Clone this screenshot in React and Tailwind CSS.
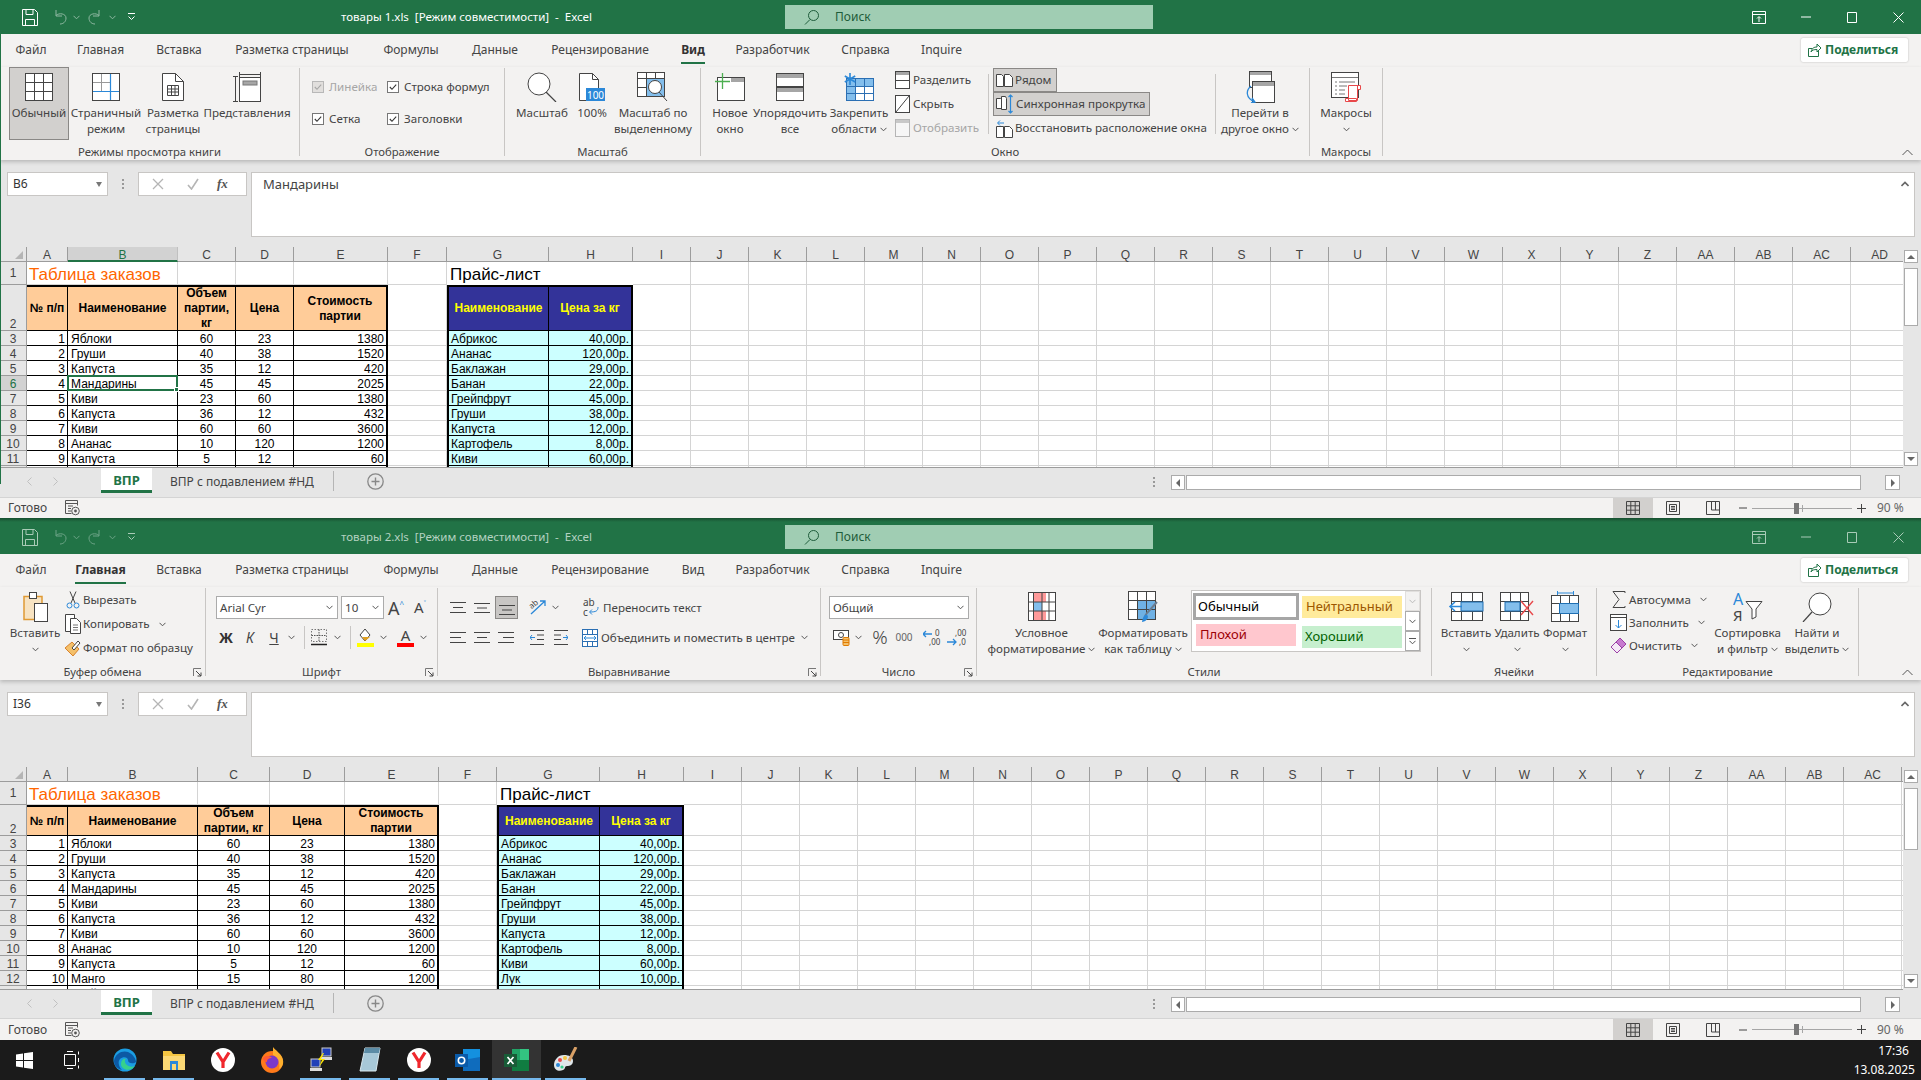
import React from "react";

/* ---------------- DATA ---------------- */

const ORDERS = [
  [1, "Яблоки", 60, 23, 1380],
  [2, "Груши", 40, 38, 1520],
  [3, "Капуста", 35, 12, 420],
  [4, "Мандарины", 45, 45, 2025],
  [5, "Киви", 23, 60, 1380],
  [6, "Капуста", 36, 12, 432],
  [7, "Киви", 60, 60, 3600],
  [8, "Ананас", 10, 120, 1200],
  [9, "Капуста", 5, 12, 60],
  [10, "Манго", 15, 80, 1200],
  [11, "Грейпфрут", 14, 45, 630],
];

const PRICES = [
  ["Абрикос", "40,00р."],
  ["Ананас", "120,00р."],
  ["Баклажан", "29,00р."],
  ["Банан", "22,00р."],
  ["Грейпфрут", "45,00р."],
  ["Груши", "38,00р."],
  ["Капуста", "12,00р."],
  ["Картофель", "8,00р."],
  ["Киви", "60,00р."],
  ["Лук", "10,00р."],
  ["Манго", "80,00р."],
];

const LETTERS = "A B C D E F G H I J K L M N O P Q R S T U V W X Y Z AA AB AC AD".split(" ");

const TABS = [
  ["Файл", "w-[60px]"],
  ["Главная", "w-[79px]"],
  ["Вставка", "w-[78px]"],
  ["Разметка страницы", "w-[148px]"],
  ["Формулы", "w-[90px]"],
  ["Данные", "w-[78px]"],
  ["Рецензирование", "w-[132px]"],
  ["Вид", "w-[54px]"],
  ["Разработчик", "w-[105px]"],
  ["Справка", "w-[81px]"],
  ["Inquire", "w-[71px]"],
];

const GRID_ONE =
  "grid-cols-[27px_41px_110px_58px_58px_94px_59px_102px_84px_repeat(22,58px)]";
const GRID_TWO =
  "grid-cols-[27px_41px_130px_72px_75px_94px_58px_103px_84px_repeat(22,58px)]";

/* ---------------- ICON HELPERS ---------------- */

const D = "#444444";
const B = "#2b88d8";
const LB = "#83beec";

function S({ w, h, children, className = "" }) {
  return (
    <svg width={w} height={h} viewBox={`0 0 ${w} ${h}`} fill="none" className={`shrink-0 ${className}`}>
      {children}
    </svg>
  );
}

function Chev({ color = "#555" }) {
  return (
    <S w={7} h={5}>
      <path d="M.5 .8 3.5 3.8 6.5 .8" stroke={color} />
    </S>
  );
}

function Launcher() {
  return (
    <S w={9} h={9}>
      <path d="M.5 8V.5H8" stroke="#777" />
      <path d="M3 3 8 8M8 4.5V8H4.5" stroke="#444" />
    </S>
  );
}

/* ---------------- RIBBON ICONS (VIEW TAB) ---------------- */

const IcNormal = () => (
  <S w={28} h={28}>
    <rect x=".5" y=".5" width="27" height="27" fill="#fff" stroke={D} />
    <path d="M9.5 1v26M18.5 1v26M1 9.5h26M1 18.5h26" stroke={D} />
  </S>
);
const IcBreak = () => (
  <S w={28} h={28}>
    <rect x=".5" y=".5" width="27" height="27" fill="#fff" stroke={D} />
    <path d="M9.5 1v17M1 9.5h17" stroke="#999" />
    <path d="M18.5 1v26M1 18.5h26" stroke={B} strokeWidth="1.2" />
  </S>
);
const IcLayout = () => (
  <S w={22} h={28}>
    <path d="M.5.5h13l8 8v19H.5z" fill="#fff" stroke={D} />
    <path d="M13.5.5v8h8" stroke={D} />
    <path d="M5.5 12.5h11v10h-11zM9.5 12.5v10M13 12.5v10M5.5 16h11M5.5 19h11" stroke={D} />
  </S>
);
const IcViews = () => (
  <S w={30} h={30}>
    <path d="M7.5 0v5M28.5 0v5M8 2.5h20M1 4.5h5M1 29.5h5M3.5 5v24" stroke={D} />
    <rect x="7.5" y="5.5" width="21" height="24" fill="#fff" stroke={D} />
    <rect x="11" y="9" width="14" height="4" fill="#a6a6a6" stroke="#777" />
  </S>
);
const IcZoom = () => (
  <S w={30} h={30}>
    <circle cx="12" cy="12" r="11" fill="#fff" stroke={D} />
    <path d="M19 20 29 30" stroke={D} strokeWidth="1.2" />
  </S>
);
const Ic100 = () => (
  <S w={28} h={28}>
    <path d="M1.5.5h13l6 6v21h-19z" fill="#fff" stroke={D} />
    <path d="M14.5.5v6h6" stroke={D} />
    <rect x="8" y="15" width="19" height="13" fill="#2b88d8" />
    <text x="17.5" y="25.5" textAnchor="middle" fontSize="10" fill="#fff" fontFamily="Noto Sans, sans-serif">100</text>
  </S>
);
const IcZoomSel = () => (
  <S w={32} h={30}>
    <rect x=".5" y=".5" width="27" height="24" fill="#fff" stroke={D} />
    <path d="M.5 6.5h27M9.5 1v24M18.5 1v24M1 15.5h27" stroke={D} />
    <rect x="10" y="7" width="17" height="17" fill={LB} />
    <circle cx="18" cy="15" r="6.5" fill="#fff" stroke={D} />
    <path d="M22 20 30 29" stroke={D} />
  </S>
);
const IcNewWin = () => (
  <S w={30} h={28}>
    <rect x="2.5" y="4.5" width="27" height="23" fill="#fff" stroke={D} />
    <rect x="16" y="5" width="13" height="4" fill="#a6a6a6" />
    <path d="M0 8.5h15M7.5 0v16" stroke="#4caf50" strokeWidth="1.3" />
  </S>
);
const IcArrange = () => (
  <S w={28} h={28}>
    <rect x=".5" y=".5" width="27" height="13" fill="#fff" stroke={D} />
    <rect x="1" y="1" width="26" height="4" fill="#a6a6a6" />
    <rect x=".5" y="14.5" width="27" height="13" fill="#fff" stroke={D} />
    <rect x="1" y="15" width="26" height="4" fill="#a6a6a6" />
  </S>
);
const IcFreeze = () => (
  <S w={30} h={28}>
    <rect x="2.5" y="5.5" width="27" height="22" fill="#fff" stroke="#2b6fb3" />
    <rect x="3" y="6" width="26" height="7" fill={LB} />
    <rect x="3" y="6" width="9" height="21" fill={LB} />
    <path d="M11.5 6v21M20.5 6v21M3 13.5h26M3 20.5h26" stroke="#2b6fb3" />
    <path d="M6 0v12M.8 3l10.4 6M.8 9l10.4-6" stroke="#2b88d8" strokeWidth="1.6" />
  </S>
);
const IcSplit = () => (
  <S w={15} h={18}>
    <rect x=".5" y=".5" width="14" height="17" fill="#fff" stroke={D} />
    <rect x="1" y="1" width="13" height="3" fill="#a6a6a6" />
    <path d="M1 9.5h13" stroke={D} />
  </S>
);
const IcHide = () => (
  <S w={15} h={18}>
    <rect x=".5" y=".5" width="14" height="17" fill="#fff" stroke={D} />
    <path d="M1 17 14 1" stroke={D} />
  </S>
);
const IcUnhide = () => (
  <S w={15} h={18}>
    <rect x=".5" y=".5" width="14" height="17" fill="#f6f6f6" stroke="#b5b5b5" />
    <rect x="1" y="1" width="13" height="3" fill="#c8c8c8" />
  </S>
);
const IcSide = () => (
  <S w={17} h={13}>
    <path d="M.5.5h5l2 2v10h-7zM8.5.5h5l3 3v9h-8z" fill="#fff" stroke={D} />
  </S>
);
const IcSync = () => (
  <S w={18} h={20}>
    <path d="M.5 4.5h4l1 1v9h-5zM5.5 2.5h4l1 2v11h-5z" fill="#fff" stroke={D} />
    <path d="M14.5 1v18M12.5 3l2-2 2 2M12.5 17l2 2 2-2" stroke={B} strokeWidth="1.2" />
  </S>
);
const IcReset = () => (
  <S w={17} h={19}>
    <path d="M.5 7.5h7v11h-7zM8.5 7.5h5l3 3v8h-8z" fill="#fff" stroke={D} />
    <path d="M8 4H2M4 1.5 1.5 4 4 6.5" stroke={B} />
  </S>
);
const IcSwitch = () => (
  <S w={30} h={32}>
    <rect x="4.5" y=".5" width="22" height="16" fill="#fff" stroke={D} />
    <rect x="5" y="1" width="21" height="3" fill="#a6a6a6" />
    <rect x="7.5" y="10.5" width="22" height="21" fill="#fff" stroke={D} />
    <rect x="8" y="11" width="21" height="4" fill="#a6a6a6" />
    <path d="M6 15C1 19 0 27 10 31M7 27l3 4-4 1" stroke={B} strokeWidth="1.3" />
  </S>
);
const IcMacros = () => (
  <S w={30} h={30}>
    <rect x=".5" y=".5" width="27" height="25" fill="#fff" stroke={D} />
    <path d="M1 5.5h26M8 10h16M8 14h8M4 10h2M4 14h2M4 18h2M4 22h2M8 18h6M8 22h6" stroke="#777" />
    <path d="M17.5 13.5h9v15h-9zM26.5 13.5h3v4h-3zM14.5 26.5h11v3h-11z" fill="#fff" stroke="#e8484a" />
  </S>
);

/* ---------------- RIBBON ICONS (HOME TAB) ---------------- */

const IcPaste = () => (
  <S w={28} h={30}>
    <path d="M3 4.5h18v23H3z" fill="#f7e3c2" stroke="#e09a34" strokeWidth="1.5" />
    <rect x="8.5" y=".5" width="7" height="6" fill="#fff" stroke={D} />
    <rect x="13.5" y="11.5" width="13" height="18" fill="#fff" stroke={D} />
  </S>
);
const IcCut = () => (
  <S w={14} h={18}>
    <path d="M4 .5 9 12M10 .5 5 12" stroke={D} />
    <circle cx="3.5" cy="14.5" r="2.5" stroke={B} />
    <circle cx="10.5" cy="14.5" r="2.5" stroke={B} />
  </S>
);
const IcCopy = () => (
  <S w={16} h={20}>
    <path d="M.5.5h9v17h-9z" fill="#fff" stroke={D} />
    <path d="M5.5 4.5h6l4 4v11h-10z" fill="#fff" stroke={D} />
    <path d="M8 11h5M8 13.5h5M8 16h5" stroke="#777" />
  </S>
);
const IcPainter = () => (
  <S w={17} h={18}>
    <path d="M1 9 8 3l7 7-6 7z" fill="#f4c06a" stroke="#d9822b" />
    <path d="M8 9l6-7 2 2-6 7z" fill="#fff" stroke={D} />
  </S>
);
const IcBorders = () => (
  <S w={16} h={17}>
    <path d="M.5.5h15v12H.5z" stroke="#777" strokeDasharray="1.5 1.5" />
    <path d="M8 .5v12M.5 6.5h15" stroke="#555" strokeDasharray="1.5 1" />
    <path d="M0 15.5h16" stroke="#222" strokeWidth="1.5" />
  </S>
);
const IcFill = () => (
  <S w={17} h={19}>
    <path d="M8 1 3 7l5 6 5-6z" fill="#fff" stroke={D} />
    <path d="M5 9h8l-5 4z" fill="#e0a020" />
    <rect x="0" y="15" width="17" height="4" fill="#ffff00" />
  </S>
);
const IcColorA = () => (
  <S w={17} h={19}>
    <text x="8.5" y="12.5" textAnchor="middle" fontSize="15" fill="#444" fontFamily="Noto Sans, sans-serif">A</text>
    <rect x="0" y="15" width="17" height="4" fill="#ff0000" />
  </S>
);
const AlignRows = ({ rows }) => (
  <S w={16} h={15}>
    {rows.map((d) => (
      <path key={d} d={d} stroke={D} />
    ))}
  </S>
);
const IcOrient = () => (
  <S w={18} h={20}>
    <path d="M2 16 16 3M11 3h5v5" stroke={B} strokeWidth="1.3" />
    <text x="1" y="9" fontSize="8" fill="#444" transform="rotate(-40 5 8)" fontFamily="Noto Sans, sans-serif">ab</text>
  </S>
);
const IcIndent = ({ flip }) => (
  <S w={14} h={15} className={flip ? "-scale-x-100" : ""}>
    <path d="M0 .5h14M7 5h7M7 9.5h7M0 14.5h14" stroke={D} />
    <path d="M5 7.5H0M2 5 0 7.5 2 10" stroke={B} />
  </S>
);
const IcWrap = () => (
  <S w={16} h={19}>
    <text x="0" y="8" fontSize="10" fill="#444" fontFamily="Noto Sans, sans-serif">ab</text>
    <text x="0" y="18" fontSize="10" fill="#444" fontFamily="Noto Sans, sans-serif">c</text>
    <path d="M15 9c0 4-2 5-8 5M9 11.5 6.5 14 9 16.5" stroke={B} />
  </S>
);
const IcMerge = () => (
  <S w={16} h={18}>
    <rect x=".5" y=".5" width="15" height="17" fill="#fff" stroke="#2b6fb3" />
    <path d="M1 5.5h14M1 12.5h14M5.5 1v4M10.5 1v4M5.5 13v4M10.5 13v4" stroke="#2b6fb3" />
    <path d="M2 9h12M4 7 2 9l2 2M12 7l2 2-2 2" stroke={B} />
  </S>
);
const IcCurrency = () => (
  <S w={17} h={19}>
    <rect x=".5" y="2.5" width="15" height="9" fill="#fff" stroke={D} />
    <circle cx="8" cy="7" r="2.5" stroke={D} />
    <rect x="10" y="9.5" width="6" height="8" rx="1" fill="#f4c06a" stroke="#e07b00" />
    <path d="M10 12h6M10 14.5h6" stroke="#e07b00" />
  </S>
);
const IcDec = ({ inc }) => (
  <S w={20} h={20}>
    <path d={inc ? "M0 14h9M6 11l3 3-3 3" : "M9 6H0M3 3 0 6l3 3"} stroke={B} strokeWidth="1.3" />
    <text x={inc ? 8 : 12} y="8" fontSize="8" fill="#444" fontFamily="Noto Sans, sans-serif">{inc ? ",00" : "0"}</text>
    <text x={inc ? 12 : 6} y="17" fontSize="8" fill="#444" fontFamily="Noto Sans, sans-serif">{inc ? ",0" : ",00"}</text>
  </S>
);
const IcCond = () => (
  <S w={28} h={29}>
    <rect x=".5" y=".5" width="27" height="28" fill="#fff" stroke={D} />
    <rect x="5" y="1" width="13" height="9" fill="#ff9a9a" />
    <rect x="5" y="10" width="9" height="9" fill={LB} />
    <rect x="5" y="19" width="13" height="9" fill="#ff9a9a" />
    <path d="M5.5 1v27M14 1v27M21 1v27M1 10h26M1 19h26" stroke={D} />
  </S>
);
const IcTable = () => (
  <S w={30} h={32}>
    <rect x=".5" y=".5" width="27" height="28" fill="#fff" stroke={D} />
    <rect x="10" y="10" width="17" height="18" fill="#6fb1e4" />
    <path d="M9.5 1v27M18.5 1v27M1 9.5h26M1 18.5h26" stroke={D} />
    <path d="M29 11 19 22l-2 3" stroke="#6b7c8f" strokeWidth="2" />
    <path d="M14 31c1-6 3-8 5-7s1 6-5 7z" fill="#2b88d8" />
  </S>
);
const IcCellInsert = () => (
  <S w={36} h={29}>
    <rect x="3.5" y=".5" width="31" height="28" fill="#fff" stroke={D} />
    <path d="M13.5 1v27M24.5 1v27M4 9.5h30M4 19.5h30" stroke={D} />
    <rect x="13" y="10" width="22" height="9" fill={LB} stroke="#1f6fb2" />
    <path d="M14 14.5H3M7 10 2 14.5 7 19" stroke={B} strokeWidth="1.5" />
  </S>
);
const IcCellDelete = () => (
  <S w={34} h={29}>
    <rect x=".5" y=".5" width="28" height="28" fill="#fff" stroke={D} />
    <path d="M10.5 1v27M20.5 1v27M1 9.5h27M1 19.5h27" stroke={D} />
    <rect x="5" y="10" width="15" height="9" fill={LB} stroke="#1f6fb2" />
    <path d="M21 9 33 23M33 9 21 23" stroke="#e8484a" strokeWidth="1.4" />
  </S>
);
const IcCellFormat = () => (
  <S w={28} h={31}>
    <path d="M6.5 0v4M22.5 0v4M7 2h15" stroke={B} />
    <rect x=".5" y="4.5" width="27" height="26" fill="#fff" stroke={D} />
    <path d="M9.5 5v25M18.5 5v25M1 12.5h26M1 22.5h26" stroke={D} />
    <rect x="8.5" y="12.5" width="19" height="10" fill={LB} stroke="#1f6fb2" />
  </S>
);
const IcSum = () => (
  <S w={14} h={17}>
    <path d="M13 2V.5H1l6 8-6 8h12V15" stroke={D} />
  </S>
);
const IcFillDown = () => (
  <S w={17} h={17}>
    <rect x=".5" y=".5" width="16" height="16" fill="#fff" stroke={D} />
    <path d="M1 3.5h15" stroke={D} />
    <path d="M8.5 6v8M5.5 11l3 3 3-3" stroke={B} />
  </S>
);
const IcEraser = () => (
  <S w={17} h={17}>
    <path d="M1 10 10 1l6 6-9 9z" fill="#c77bd0" stroke="#9b3fa6" />
    <path d="M1 10l5-5 6 6-5 5z" fill="#f5e9f7" stroke="#9b3fa6" />
  </S>
);
const IcSort = () => (
  <S w={30} h={32}>
    <text x="0" y="14" fontSize="16" fill="#2b88d8" fontFamily="Noto Sans, sans-serif">А</text>
    <text x="0" y="30" fontSize="15" fill="#444" fontFamily="Noto Sans, sans-serif">Я</text>
    <path d="M13 10.5h16L23 18v8l-4 2V18z" fill="#fff" stroke={D} />
  </S>
);
const IcFind = () => (
  <S w={30} h={30}>
    <circle cx="18" cy="12" r="11" fill="#fff" stroke={D} />
    <path d="M10 20 1 30" stroke={D} strokeWidth="1.2" />
  </S>
);

/* ---------------- RIBBON PIECES ---------------- */

function Big({ w, icon, a, b, chev, disabled, active, className = "" }) {
  return (
    <div
      className={`flex h-[73px] shrink-0 flex-col items-center ${w} ${
        active ? "-mt-px border border-[#8a8886] bg-[#d2d0ce] pt-px" : ""
      } ${className}`}
    >
      <div className={`flex items-center ${active ? "h-[36px]" : "h-[37px]"}`}>{icon}</div>
      <div className={`whitespace-nowrap leading-[16px] ${disabled ? "text-[#a6a6a6]" : ""}`}>{a}</div>
      {b ? (
        <div className="flex items-center gap-[3px] whitespace-nowrap leading-[16px]">
          {b}
          {chev && <Chev />}
        </div>
      ) : (
        chev && (
          <div className="flex h-[16px] items-center">
            <Chev />
          </div>
        )
      )}
    </div>
  );
}

function Small({ icon, text, chev, disabled, h = "h-[24px]", iconW = "w-[17px]" }) {
  return (
    <div className={`flex items-center gap-[2px] whitespace-nowrap ${h} ${disabled ? "text-[#a6a6a6]" : ""}`}>
      <div className={`flex justify-center ${iconW}`}>{icon}</div>
      <span>{text}</span>
      {chev && <span className="ml-[7px] flex"><Chev /></span>}
    </div>
  );
}

function Group({ w, label, launcher, children }) {
  return (
    <div className={`relative mt-px h-[88px] shrink-0 border-r border-[#c8c6c4] ${w}`}>
      <div className="flex h-[76px]">{children}</div>
      <div className="h-[12px] text-center text-[11.3px] leading-[16px] text-[#444]">{label}</div>
      {launcher && (
        <div className="absolute bottom-[-1px] right-[3px] flex">
          <Launcher />
        </div>
      )}
    </div>
  );
}

function Check({ label, disabled }) {
  return (
    <div className={`flex h-[17px] items-center gap-[5px] whitespace-nowrap ${disabled ? "text-[#a6a6a6]" : ""}`}>
      <S w={12} h={12}>
        <rect x=".5" y=".5" width="11" height="11" fill={disabled ? "#e1dfdd" : "#fff"} stroke={disabled ? "#b8b8b8" : "#777"} />
        <path d="M2.8 6 5 8.3 9.2 3.6" stroke={disabled ? "#a6a6a6" : "#333"} strokeWidth="1.1" />
      </S>
      {label}
    </div>
  );
}

function Slot({ w, children, active }) {
  return (
    <div className={`flex h-[23px] shrink-0 items-center justify-center ${w} ${active ? "border border-[#8a8886] bg-[#c8c6c4]" : ""}`}>
      {children}
    </div>
  );
}

const VSep = ({ className = "h-[23px]" }) => <div className={`w-px shrink-0 bg-[#c8c6c4] ${className}`} />;

function ViewRibbon() {
  return (
    <>
      <Group w="w-[300px]" label="Режимы просмотра книги">
        <Big w="w-[60px]" className="ml-[9px]" active icon={<IcNormal />} a="Обычный" />
        <Big w="w-[74px]" icon={<IcBreak />} a="Страничный" b="режим" />
        <Big w="w-[60px]" icon={<IcLayout />} a="Разметка" b="страницы" />
        <Big w="w-[88px]" icon={<IcViews />} a="Представления" />
      </Group>
      <Group w="w-[205px]" label="Отображение">
        <div className="ml-[12px] mt-[10px] grid h-[49px] grid-cols-[75px_100px] content-between">
          <Check disabled label="Линейка" />
          <Check label="Строка формул" />
          <Check label="Сетка" />
          <Check label="Заголовки" />
        </div>
      </Group>
      <Group w="w-[196px]" label="Масштаб">
        <Big w="w-[52px]" className="ml-[11px]" icon={<IcZoom />} a="Масштаб" />
        <Big w="w-[48px]" icon={<Ic100 />} a="100%" />
        <Big w="w-[74px]" icon={<IcZoomSel />} a="Масштаб по" b="выделенному" />
      </Group>
      <Group w="w-[609px]" label="Окно">
        <Big w="w-[52px]" className="ml-[3px]" icon={<IcNewWin />} a="Новое" b="окно" />
        <Big w="w-[68px]" icon={<IcArrange />} a="Упорядочить" b="все" />
        <Big w="w-[70px]" icon={<IcFreeze />} a="Закрепить" b="области" chev />
        <div className="w-[94px] shrink-0">
          <Small icon={<IcSplit />} text="Разделить" />
          <Small icon={<IcHide />} text="Скрыть" />
          <Small icon={<IcUnhide />} text="Отобразить" disabled />
        </div>
        <VSep className="mt-[6px] h-[60px]" />
        <div className="ml-[4px] w-[222px] shrink-0">
          <div className="flex h-[24px] w-[64px] items-center gap-[2px] whitespace-nowrap border border-[#8a8886] bg-[#d2d0ce] pl-[2px]">
            <IcSide />
            Рядом
          </div>
          <div className="flex h-[24px] w-[157px] items-center gap-[2px] whitespace-nowrap border border-[#8a8886] bg-[#d2d0ce] pl-[2px]">
            <IcSync />
            Синхронная прокрутка
          </div>
          <div className="flex h-[24px] items-center gap-[2px] whitespace-nowrap pl-[3px]">
            <IcReset />
            Восстановить расположение окна
          </div>
        </div>
        <VSep className="mt-[6px] h-[60px]" />
        <Big w="w-[88px]" icon={<IcSwitch />} a="Перейти в" b="другое окно" chev />
      </Group>
      <Group w="w-[73px]" label="Макросы">
        <Big w="w-[72px]" icon={<IcMacros />} a="Макросы" chev />
      </Group>
    </>
  );
}

function HomeRibbon() {
  return (
    <>
      <Group w="w-[206px]" label="Буфер обмена" launcher>
        <Big w="w-[54px]" className="ml-[8px]" icon={<IcPaste />} a="Вставить" chev />
        <div className="ml-[2px] shrink-0">
          <Small icon={<IcCut />} text="Вырезать" />
          <Small icon={<IcCopy />} text="Копировать" chev />
          <Small icon={<IcPainter />} text="Формат по образцу" />
        </div>
      </Group>
      <Group w="w-[232px]" label="Шрифт" launcher>
        <div className="ml-[10px] mt-[8px]">
          <div className="flex items-center">
            <div className="flex h-[23px] w-[122px] items-center justify-between border border-[#ababab] bg-white px-[3px] pr-[4px]">
              Arial Cyr
              <Chev />
            </div>
            <div className="ml-[3px] flex h-[23px] w-[43px] items-center justify-between border border-[#ababab] bg-white px-[3px] pr-[4px]">
              10
              <Chev />
            </div>
            <Slot w="w-[24px]">
              <span className="text-[18px] leading-none">A</span>
              <span className="mb-[8px] text-[8px] leading-none text-[#2b88d8]">^</span>
            </Slot>
            <Slot w="w-[24px]">
              <span className="text-[15px] leading-none">A</span>
              <span className="mb-[8px] text-[8px] leading-none text-[#2b88d8]">˅</span>
            </Slot>
          </div>
          <div className="-ml-[2px] mt-[7px] flex items-center">
            <Slot w="w-[24px]"><span className="text-[14px] font-bold text-[#333]">Ж</span></Slot>
            <Slot w="w-[24px]"><span className="text-[14px] italic">К</span></Slot>
            <Slot w="w-[24px]"><span className="text-[14px] underline">Ч</span></Slot>
            <Slot w="w-[10px]"><Chev /></Slot>
            <VSep className="ml-[8px] h-[23px]" />
            <Slot w="w-[28px]"><IcBorders /></Slot>
            <Slot w="w-[8px]"><Chev /></Slot>
            <VSep className="ml-[9px] h-[23px]" />
            <Slot w="w-[29px]"><IcFill /></Slot>
            <Slot w="w-[6px]"><Chev /></Slot>
            <Slot w="w-[24px] ml-[7px]"><IcColorA /></Slot>
            <Slot w="w-[12px]"><Chev /></Slot>
          </div>
        </div>
      </Group>
      <Group w="w-[383px]" label="Выравнивание" launcher>
        <div className="ml-[8px] mt-[8px]">
          <div className="flex items-center">
            <Slot w="w-[24px]"><AlignRows rows={["M0 2.5h16", "M3 7.5h10", "M0 12.5h16"]} /></Slot>
            <Slot w="w-[24px]"><AlignRows rows={["M0 3.5h16", "M3 8h10", "M0 12.5h16"]} /></Slot>
            <Slot w="w-[23px] ml-[1px]" active><AlignRows rows={["M0 5.5h16", "M3 10h10", "M0 14.5h16"]} /></Slot>
            <VSep className="ml-[3px]" />
            <Slot w="w-[26px] ml-[3px]"><IcOrient /></Slot>
            <Slot w="w-[8px]"><Chev /></Slot>
            <VSep className="ml-[17px]" />
            <div className="ml-[6px] flex items-center gap-[4px] whitespace-nowrap">
              <IcWrap />
              Переносить текст
            </div>
          </div>
          <div className="mt-[7px] flex items-center">
            <Slot w="w-[24px]"><AlignRows rows={["M0 2.5h16", "M0 7.5h11", "M0 12.5h16"]} /></Slot>
            <Slot w="w-[24px]"><AlignRows rows={["M0 2.5h16", "M3 7.5h10", "M0 12.5h16"]} /></Slot>
            <Slot w="w-[24px]"><AlignRows rows={["M0 2.5h16", "M5 7.5h11", "M0 12.5h16"]} /></Slot>
            <VSep className="ml-[3px]" />
            <Slot w="w-[24px] ml-[3px]"><IcIndent /></Slot>
            <Slot w="w-[24px]"><IcIndent flip /></Slot>
            <VSep className="ml-[3px]" />
            <div className="ml-[5px] flex items-center gap-[3px] whitespace-nowrap">
              <IcMerge />
              <span className="w-[188px]">Объединить и поместить в центре</span>
              <span className="ml-[9px] flex"><Chev /></span>
            </div>
          </div>
        </div>
      </Group>
      <Group w="w-[156px]" label="Число" launcher>
        <div className="ml-[8px] mt-[8px]">
          <div className="flex h-[23px] w-[140px] items-center justify-between border border-[#ababab] bg-white px-[3px] pr-[4px]">
            Общий
            <Chev />
          </div>
          <div className="mt-[7px] flex items-center">
            <Slot w="w-[24px]"><IcCurrency /></Slot>
            <Slot w="w-[10px]"><Chev /></Slot>
            <Slot w="w-[24px] ml-[5px]"><span className="text-[19px] font-light leading-none">%</span></Slot>
            <Slot w="w-[24px]"><span className="text-[10px] text-[#666]">000</span></Slot>
            <VSep className="ml-[4px]" />
            <Slot w="w-[24px]"><IcDec /></Slot>
            <Slot w="w-[24px]"><IcDec inc /></Slot>
          </div>
        </div>
      </Group>
      <Group w="w-[455px]" label="Стили">
        <Big w="w-[113px]" className="ml-[8px]" icon={<IcCond />} a="Условное" b="форматирование" chev />
        <Big w="w-[90px]" icon={<IcTable />} a="Форматировать" b="как таблицу" chev />
        <div className="ml-[3px] mt-[2px] flex h-[62px] w-[230px] border border-[#c8c6c4] bg-white">
          <div className="grid w-[214px] grid-cols-[106px_100px] content-start gap-x-[3px] pl-[1px] pt-[2px] text-[13px]">
            <div className="flex h-[27px] items-center border-[3px] border-[#a6a6a6] pl-[2px] text-black">Обычный</div>
            <div className="mt-[3px] flex h-[22px] items-center bg-[#ffeb9c] pl-[4px] text-[#9c5700]">Нейтральный</div>
            <div className="ml-[3px] mt-[4px] flex h-[22px] w-[100px] items-center bg-[#ffc7ce] pl-[4px] text-[#9c0006]">Плохой</div>
            <div className="mt-[6px] flex h-[22px] items-center bg-[#c6efce] pl-[3px] text-[#006100]">Хороший</div>
          </div>
          <div className="flex w-[15px] flex-col">
            <div className="flex h-[20px] items-center justify-center border border-[#e1dfdd] bg-[#f3f2f1]"><Chev color="#bbb" /></div>
            <div className="flex h-[20px] items-center justify-center border border-[#ababab]"><Chev /></div>
            <div className="flex h-[20px] flex-col items-center justify-center gap-[1px] border border-[#ababab]">
              <div className="h-px w-[7px] bg-[#555]" />
              <Chev />
            </div>
          </div>
        </div>
      </Group>
      <Group w="w-[165px]" label="Ячейки">
        <Big w="w-[48px]" className="ml-[10px]" icon={<IcCellInsert />} a="Вставить" chev />
        <Big w="w-[54px]" icon={<IcCellDelete />} a="Удалить" chev />
        <Big w="w-[42px]" icon={<IcCellFormat />} a="Формат" chev />
      </Group>
      <Group w="w-[262px]" label="Редактирование">
        <div className="ml-[13px] w-[105px] shrink-0">
          <Small h="h-[23px]" icon={<IcSum />} text="Автосумма" chev />
          <Small h="h-[23px]" icon={<IcFillDown />} text="Заполнить" chev />
          <Small h="h-[23px]" icon={<IcEraser />} text="Очистить" chev />
        </div>
        <Big w="w-[65px]" icon={<IcSort />} a="Сортировка" b="и фильтр" chev />
        <Big w="w-[74px]" icon={<IcFind />} a="Найти и" b="выделить" chev />
      </Group>
    </>
  );
}

/* ---------------- SHEET ---------------- */

function Cell({ className = "", wrap, children }) {
  return (
    <div className={`min-w-0 px-[2px] ${wrap ? "whitespace-normal" : "whitespace-nowrap"} ${className}`}>
      {children}
    </div>
  );
}

const GRID_LINE = "border-r border-b border-[#d4d4d4]";
const BOX = "border-r border-b border-black";

function HeaderRow({ grid, selCol, count }) {
  return (
    <div className={`grid h-[15px] grid-rows-[15px] ${grid}`}>
      <div className="flex items-end justify-end border-r border-b border-[#9c9c9c] bg-[#e6e6e6] pr-[3px]">
        <div className="mb-[2px] h-0 w-0 border-b-[8px] border-l-[8px] border-b-[#b5b5b5] border-l-transparent" />
      </div>
      {LETTERS.slice(0, count).map((l, i) => (
        <div
          key={l}
          className={`text-center leading-[16px] text-[#444] ${
            i === selCol
              ? "border-r border-b-2 border-[#c0c0c0] border-b-[#217346] bg-[#d2d2d2] text-[#217346]"
              : "border-r border-b border-[#9c9c9c] bg-[#e6e6e6]"
          }`}
        >
          {l}
        </div>
      ))}
    </div>
  );
}

function RowHead({ n, selected, className = "items-end" }) {
  return (
    <div
      className={`flex justify-center border-r border-b border-[#9c9c9c] text-[#444] ${
        selected ? "bg-[#d2d2d2] text-[#217346]" : "bg-[#e6e6e6]"
      } ${className}`}
    >
      <span className="leading-[12px]">{n}</span>
    </div>
  );
}

const Blank = ({ n }) =>
  Array.from({ length: n }, (_, i) => <div key={i} className={GRID_LINE} />);

function TitleRow({ grid, count }) {
  const sheetFont = "font-['Liberation_Sans',sans-serif] text-[17px] leading-[25px]";
  return (
    <div className={`grid h-[23px] grid-rows-[23px] ${grid}`}>
      <RowHead n={1} className="items-center" />
      <div className={`col-span-2 overflow-visible whitespace-nowrap pl-[2px] text-[#ff6600] ${sheetFont} ${GRID_LINE}`}>
        Таблица заказов
      </div>
      <Blank n={4} />
      <div className={`col-span-2 whitespace-nowrap pl-[3px] text-black ${sheetFont}`}>Прайс-лист</div>
      <Blank n={count - 8} />
    </div>
  );
}

function HeadRow({ grid, h, count }) {
  const orange = "flex items-center justify-center text-center font-bold leading-[15px] bg-[#ffcc99] border-t-2";
  const blue = "flex items-center justify-center text-center font-bold leading-[15px] bg-[#333399] text-[#ffff00] border-t-2";
  return (
    <div className={`grid ${h} ${grid}`}>
      <RowHead n={2} />
      <Cell className={`${BOX} ${orange}`}>№ п/п</Cell>
      <Cell className={`${BOX} ${orange}`}>Наименование</Cell>
      <Cell wrap className={`${BOX} ${orange}`}>Объем партии, кг</Cell>
      <Cell className={`${BOX} ${orange}`}>Цена</Cell>
      <Cell wrap className={`${BOX} ${orange} border-r-2`}>Стоимость партии</Cell>
      <div className={GRID_LINE} />
      <Cell className={`${BOX} ${blue} border-l-2`}>Наименование</Cell>
      <Cell className={`${BOX} ${blue} border-r-2`}>Цена за кг</Cell>
      <Blank n={count - 8} />
    </div>
  );
}

// a row pushed almost out of the sheet shows only its lines, so it gets no text
function DataRow({ grid, i, count, selected, empty }) {
  const o = empty ? ["", "", "", "", ""] : ORDERS[i];
  const p = empty ? ["", ""] : PRICES[i];
  const n = i + 3;
  return (
    <div className={`grid h-[15px] grid-rows-[15px] leading-[16px] ${grid}`}>
      <RowHead n={empty ? "" : n} selected={selected} />
      <Cell className={`${BOX} bg-white text-right`}>{o[0]}</Cell>
      <div className={`relative whitespace-nowrap bg-white px-[3px] ${BOX}`}>
        {o[1]}
        {selected && (
          <div className="absolute -left-[1px] -top-[1px] z-10 h-[16px] w-[111px] border-2 border-[#217346]">
            <div className="absolute -bottom-[3px] -right-[3px] h-[5px] w-[5px] border border-white bg-[#217346]" />
          </div>
        )}
      </div>
      <Cell className={`${BOX} bg-white text-center`}>{o[2]}</Cell>
      <Cell className={`${BOX} bg-white text-center`}>{o[3]}</Cell>
      <Cell className={`${BOX} border-r-2 bg-white text-right`}>{o[4]}</Cell>
      <div className={GRID_LINE} />
      <Cell className={`${BOX} border-l-2 bg-[#ccffff]`}>{p[0]}</Cell>
      <Cell className={`${BOX} border-r-2 bg-[#ccffff] text-right`}>{p[1]}</Cell>
      <Blank n={count - 8} />
    </div>
  );
}

function VScroll({ thumb, gap }) {
  return (
    <div className="flex w-[18px] shrink-0 flex-col bg-[#e6e6e6] pt-[3px] pl-[1px]">
      <div className="flex h-[13px] w-[14px] items-center justify-center border border-[#ababab] bg-white">
        <div className="h-0 w-0 border-x-[4px] border-b-[4px] border-x-transparent border-b-[#666]" />
      </div>
      <div className={`mt-[5px] w-[14px] border border-[#ababab] bg-white ${thumb}`} />
      <div className={gap} />
      <div className="flex h-[14px] w-[14px] items-center justify-center border border-[#ababab] bg-white">
        <div className="h-0 w-0 border-x-[4px] border-t-[4px] border-x-transparent border-t-[#666]" />
      </div>
    </div>
  );
}

function Sheet({ grid, height, rowTwo, count, rows, lastEmpty, selRow, selCol, thumb, gap }) {
  return (
    <div className={`flex ${height}`}>
      <div className="w-[1903px] overflow-hidden border-b border-[#9c9c9c] bg-white font-['Liberation_Sans',sans-serif] text-[12px] text-black">
        <HeaderRow grid={grid} selCol={selCol} count={count} />
        <TitleRow grid={grid} count={count} />
        <HeadRow grid={grid} h={rowTwo} count={count} />
        {Array.from({ length: rows }, (_, i) => (
          <DataRow
            key={i}
            grid={grid}
            i={i}
            count={count}
            selected={i + 3 === selRow}
            empty={lastEmpty && i === rows - 1}
          />
        ))}
      </div>
      <VScroll thumb={thumb} gap={gap} />
    </div>
  );
}

/* ---------------- WINDOW ---------------- */

function TabBar({ activeTab }) {
  return (
    <div className="flex h-[33px] items-center bg-[#f3f2f1] pb-[2px] pl-[1px] text-[#444]">
      {TABS.map(([name, w]) => {
        const on = name === activeTab;
        return (
          <div key={name} className={`flex h-full shrink-0 items-center justify-center ${w} ${on ? "font-bold text-[#333]" : ""}`}>
            <span className="relative">
              {name}
              {on && <span className="absolute -bottom-[5px] inset-x-0 h-[2px] bg-[#217346]" />}
            </span>
          </div>
        );
      })}
      <div className="ml-auto mr-[13px] flex h-[24px] w-[107px] items-center gap-[4px] rounded-[2px] bg-white pl-[7px] font-bold text-[#217346] shadow-[0_0_2px_rgba(0,0,0,0.25)]">
        <S w={13} h={14}>
          <path d="M.5 5.5h4M.5 5.5v8h10V8" stroke="#217346" />
          <path d="M3 9c1-4 3-5 6-5V1l4 4-4 4V6.5C6 6.5 4 7 3 9z" stroke="#217346" />
        </S>
        Поделиться
      </div>
    </div>
  );
}

function TitleBar({ title, active, tall }) {
  const c = active ? "#ffffff" : "#a9cbb7";
  const dim = active ? "#8fb8a2" : "#6da487";
  return (
    <div className={`relative flex bg-[#217346] ${tall ? "h-[36px] pt-[2px]" : "h-[34px]"}`}>
      {tall && <div className="absolute inset-x-0 top-0 h-[4px] bg-gradient-to-b from-[#174f30] to-[#217346]" />}
      <div className="flex h-[34px] w-[785px] shrink-0 items-center">
        <S w={16} h={17} className="ml-[22px]">
          <path d="M.5.5h12l3 3v13H.5z" stroke={c} />
          <path d="M4 .5v5h7v-5M3.5 16.5v-6h9v6" stroke={c} />
        </S>
        <S w={15} h={16} className="ml-[14px]">
          <path d="M4 1v6h6M4 6.5C7 3.5 14 4.5 14 9c0 4-3 6-6 6" stroke={dim} />
        </S>
        <span className="ml-[6px] flex"><Chev color={dim} /></span>
        <S w={15} h={16} className="ml-[8px]">
          <path d="M11 1v6H5M11 6.5C8 3.5 1 4.5 1 9c0 4 3 6 6 6" stroke={dim} />
        </S>
        <span className="ml-[6px] flex"><Chev color={dim} /></span>
        <S w={7} h={8} className="ml-[12px]">
          <path d="M0 .5h7M.5 3.5 3.5 6.5 6.5 3.5" stroke={c} />
        </S>
        <span className={`ml-[206px] whitespace-pre text-[11.5px] ${active ? "text-white" : "text-[#b4d2c1]"}`}>{title}</span>
      </div>
      <div className="mt-[5px] flex h-[24px] w-[368px] shrink-0 items-center bg-[#a0cdb3] pl-[19px] text-[#1e5c3a]">
        <S w={16} h={16}>
          <circle cx="9.5" cy="6.5" r="5" stroke="#1e5c3a" />
          <path d="M6 10.5 1 15.5" stroke="#1e5c3a" />
        </S>
        <span className="ml-[15px]">Поиск</span>
      </div>
      <div className="flex h-[34px] flex-1 items-center">
        <S w={14} h={13} className="ml-[599px]">
          <path d="M.5.5h13v12H.5z" stroke={c} />
          <path d="M1 3.5h12M7 11V6M5 7.5 7 5.5l2 2" stroke={c} />
        </S>
        <S w={10} h={2} className="ml-[35px]">
          <path d="M0 1h10" stroke={c} />
        </S>
        <S w={10} h={11} className="ml-[36px]">
          <path d="M.5.5h9v10h-9z" stroke={c} />
        </S>
        <S w={11} h={11} className="ml-[36px]">
          <path d="M.5.5l10 10M10.5.5l-10 10" stroke={c} />
        </S>
      </div>
    </div>
  );
}

function FormulaBar({ name, value }) {
  return (
    <div className="flex h-[87px] bg-[#e6e6e6] pt-[12px]">
      <div className="ml-[7px] flex h-[24px] w-[101px] items-center border border-[#c8c6c4] bg-white pl-[5px] pr-[5px] text-[#333]">
        <span className="flex-1">{name}</span>
        <div className="h-0 w-0 border-x-[3.5px] border-t-[5px] border-x-transparent border-t-[#777]" />
      </div>
      <div className="flex h-[24px] w-[30px] flex-col items-center justify-center gap-[2px]">
        <div className="h-[2px] w-[2px] bg-[#999]" />
        <div className="h-[2px] w-[2px] bg-[#999]" />
        <div className="h-[2px] w-[2px] bg-[#999]" />
      </div>
      <div className="flex h-[24px] w-[109px] items-center border border-[#c8c6c4] bg-white">
        <S w={12} h={12} className="ml-[13px]">
          <path d="M1 1 11 11M11 1 1 11" stroke="#b5b5b5" strokeWidth="1.3" />
        </S>
        <S w={12} h={12} className="ml-[23px]">
          <path d="M1 7 4.5 11 11 1" stroke="#b5b5b5" strokeWidth="1.6" />
        </S>
        <span className="ml-[18px] font-['Liberation_Serif',serif] text-[13px] font-bold italic text-[#555]">fx</span>
      </div>
      <div className="ml-[4px] flex h-[65px] w-[1664px] border border-[#c8c6c4] bg-white pl-[11px] pr-[5px] pt-[2px] text-[13px] text-[#444]">
        <span className="flex-1">{value}</span>
        <S w={8} h={6} className="mt-[6px]">
          <path d="M.5 5 4 1.5 7.5 5" stroke="#666" strokeWidth="1.6" />
        </S>
      </div>
    </div>
  );
}

function SheetTabs({ h }) {
  return (
    <div className={`flex bg-[#e6e6e6] ${h}`}>
      <div className="flex h-[24px] w-[101px] items-center gap-[21px] pl-[27px] pt-[3px]">
        <S w={5} h={9}><path d="M4.5 .5.5 4.5l4 4" stroke="#c0c0c0" /></S>
        <S w={5} h={9}><path d="M.5 .5l4 4-4 4" stroke="#c0c0c0" /></S>
      </div>
      <div className="flex h-[25px] w-[51px] items-center justify-center border-b-[3px] border-[#217346] bg-white pt-[3px] text-[13px] font-bold text-[#217346]">
        ВПР
      </div>
      <div className="ml-[18px] flex h-[24px] w-[145px] items-center whitespace-nowrap pt-[3px] text-[#444]">ВПР с подавлением #НД</div>
      <div className="ml-[18px] mt-[3px] h-[20px] w-px bg-[#b5b5b5]" />
      <div className="ml-[33px] flex h-[24px] items-center pt-[3px]">
        <S w={17} h={17}>
          <circle cx="8.5" cy="8.5" r="7.7" stroke="#888" strokeWidth="1.3" />
          <path d="M4.5 8.5h8M8.5 4.5v8" stroke="#888" strokeWidth="1.4" />
        </S>
      </div>
      <div className="flex-1" />
      <div className="mr-[16px] mt-[7px] flex h-[13px] flex-col justify-center gap-[2px]">
        <div className="h-[2px] w-[2px] bg-[#999]" />
        <div className="h-[2px] w-[2px] bg-[#999]" />
        <div className="h-[2px] w-[2px] bg-[#999]" />
      </div>
      <div className="mt-[7px] flex h-[15px] w-[729px] shrink-0">
        <div className="flex w-[14px] items-center justify-center border border-[#ababab] bg-white">
          <div className="h-0 w-0 border-y-[4px] border-r-[4px] border-y-transparent border-r-[#666]" />
        </div>
        <div className="ml-[1px] w-[675px] border border-[#ababab] bg-white" />
        <div className="flex-1" />
        <div className="flex w-[15px] items-center justify-center border border-[#ababab] bg-white">
          <div className="h-0 w-0 border-y-[4px] border-l-[4px] border-y-transparent border-l-[#666]" />
        </div>
      </div>
      <div className="w-[21px] shrink-0" />
    </div>
  );
}

function StatusBar({ h }) {
  return (
    <div className={`flex items-center border-t border-[#d4d4d4] bg-[#f3f2f1] text-[#444] ${h}`}>
      <span className="ml-[8px] w-[57px]">Готово</span>
      <S w={15} h={16}>
        <path d="M.5.5h12v5M.5.5v13h6M1 3.5h11M3 6h5M3 8.5h3M3 11h3" stroke="#555" />
        <circle cx="10.5" cy="11" r="3.8" stroke="#555" />
        <circle cx="10.5" cy="11" r="1.4" fill="#555" />
      </S>
      <div className="ml-auto flex h-full w-[40px] items-center justify-center bg-[#d2d0ce]">
        <S w={14} h={14}>
          <path d="M.5.5h13v13H.5zM4.8 1v13M9.2 1v13M1 4.8h13M1 9.2h13" stroke={D} />
        </S>
      </div>
      <div className="flex h-full w-[40px] items-center justify-center">
        <S w={14} h={14}>
          <path d="M.5.5h13v13H.5zM3.5 3.5h7v7h-7zM5 5.5h4M5 7h4M5 8.5h4" stroke={D} />
        </S>
      </div>
      <div className="flex h-full w-[40px] items-center justify-center">
        <S w={14} h={14}>
          <path d="M.5.5h13v13H.5zM5.5 1v8h8M9.5 1v8" stroke={D} />
        </S>
      </div>
      <S w={8} h={2} className="ml-[6px]"><path d="M0 1h8" stroke={D} /></S>
      <div className="relative ml-[5px] h-px w-[100px] bg-[#a6a6a6]">
        <div className="absolute -top-[5px] left-[42px] h-[11px] w-[5px] bg-[#777]" />
        <div className="absolute -top-[3px] left-[50px] h-[7px] w-px bg-[#a6a6a6]" />
      </div>
      <S w={9} h={9} className="ml-[5px]"><path d="M0 4.5h9M4.5 0v9" stroke={D} /></S>
      <span className="ml-[11px] mr-[18px] w-[26px] whitespace-nowrap text-[#666]">90 %</span>
    </div>
  );
}

/* ---------------- TASKBAR ---------------- */

const TbEdge = () => (
  <S w={24} h={24}>
    <circle cx="12" cy="12" r="11.5" fill="#1b9de2" />
    <path d="M1 13C2 5 10 2 15 4c5 2 8 7 8 10-2 2-8 2-8-2 0-3-5-4-8-1-2 2-2 7 2 11-4-1-8-4-8-9z" fill="#0c59a4" />
    <path d="M8 16c0 5 8 9 14 2-2 1-6 1-8-1-2-1-3-5-1-6-2-1-5 1-5 5z" fill="#36d08c" />
  </S>
);
const TbExplorer = () => (
  <S w={24} h={22}>
    <path d="M1 2h8l2 3h12v4H1z" fill="#f4c542" />
    <path d="M1 7h22v14H1z" fill="#fbd875" />
    <rect x="8" y="12" width="8" height="9" fill="#2b88d8" />
    <rect x="10" y="15" width="4" height="6" fill="#fbd875" />
  </S>
);
const TbYandex = () => (
  <S w={24} h={24}>
    <circle cx="12" cy="12" r="12" fill="#fff" />
    <path d="M6 4.5 12 14v6M18 4.5 12 14" stroke="#f0272d" strokeWidth="3.2" />
  </S>
);
const TbFirefox = () => (
  <S w={24} h={26}>
    <circle cx="12" cy="15" r="11" fill="#ff7a1a" />
    <path d="M13 0c2 3 9 7 10 13 1 5-2 8-4 9 2-6-3-13-6-14z" fill="#ffb02e" />
    <circle cx="12" cy="15" r="6.5" fill="#7b39c9" />
    <path d="M3 11c3-3 7-2 9 0-3 0-5 1-5 4-3 0-4-2-4-4z" fill="#ff5a36" />
  </S>
);
const TbNetwork = () => (
  <S w={24} h={26}>
    <rect x="13" y="1" width="9" height="8" fill="#2140b8" stroke="#ccc" />
    <rect x="2" y="12" width="9" height="8" fill="#2140b8" stroke="#ccc" />
    <rect x="1" y="21" width="12" height="3" fill="#ddd" />
    <rect x="12" y="10" width="11" height="3" fill="#ddd" />
    <path d="M14 6 9 13h4l-3 7 6-8h-4l3-6z" fill="#ffe600" />
  </S>
);
const TbNotes = () => (
  <S w={22} h={26}>
    <path d="M6 1h15l-4 23H1z" fill="#a7c8d8" stroke="#d9e8ef" />
    <path d="M6 1h15l-1 5H5z" fill="#5c8ca6" />
  </S>
);
const TbOutlook = () => (
  <S w={26} h={26}>
    <rect x="8" y="2" width="17" height="22" fill="#1490df" />
    <path d="M8 13 25 10v14H8z" fill="#0f6cbd" />
    <rect x="0" y="7" width="13" height="13" fill="#0a5aa8" />
    <circle cx="6.5" cy="13.5" r="3.2" stroke="#fff" strokeWidth="1.6" />
  </S>
);
const TbExcel = () => (
  <S w={26} h={26}>
    <rect x="8" y="2" width="17" height="22" fill="#21a366" />
    <rect x="16" y="2" width="9" height="11" fill="#33c481" />
    <rect x="8" y="13" width="17" height="11" fill="#107c41" />
    <rect x="0" y="7" width="13" height="13" fill="#185c37" />
    <path d="M3.5 10 9.5 17M9.5 10 3.5 17" stroke="#fff" strokeWidth="1.7" />
  </S>
);
const TbPaint = () => (
  <S w={24} h={26}>
    <path d="M10 8C4 8 0 13 0 18s5 7 9 5c3-1 1-4 4-4s6-1 6-5-4-6-9-6z" fill="#dfe6ea" />
    <circle cx="6" cy="13" r="2" fill="#e8484a" />
    <circle cx="4" cy="18" r="2" fill="#2b88d8" />
    <circle cx="11" cy="11" r="2" fill="#f4c542" />
    <circle cx="8" cy="20" r="1.6" fill="#36d08c" />
    <path d="M22 0 15 14" stroke="#d9a066" strokeWidth="3" />
  </S>
);

const TASK_ITEMS = [
  [<TbEdge key="e" />, true],
  [<TbExplorer key="f" />, true],
  [<TbYandex key="y" />, false],
  [<TbFirefox key="o" />, false],
  [<TbNetwork key="n" />, true],
  [<TbNotes key="t" />, true],
  [<TbYandex key="y2" />, true],
  [<TbOutlook key="u" />, true],
  [<TbExcel key="x" />, true, true],
  [<TbPaint key="p" />, true],
];

function Taskbar() {
  return (
    <div className="flex h-[40px] items-stretch bg-[#1b1b1b]">
      <div className="flex w-[48px] items-center justify-center">
        <S w={17} h={17}>
          <path d="M0 2.4 7 1.4V8H0zM8 1.3 17 0v8H8zM0 9h7v6.6l-7-1zM8 9h9v8l-9-1.3z" fill="#fff" />
        </S>
      </div>
      <div className="flex w-[48px] items-center justify-center">
        <S w={17} h={18}>
          <path d="M.5 3.5h11v11H.5zM3 .5h6M3 17.5h6M14.5 .5v3M14.5 7v4M14.5 14.5v3" stroke="#fff" />
        </S>
      </div>
      <div className="w-[4px]" />
      {TASK_ITEMS.map(([icon, running, current], i) => (
        <div key={i} className={`relative flex w-[49px] items-center justify-center ${current ? "bg-[#333]" : ""}`}>
          {icon}
          {running && (
            <div className={`absolute bottom-0 h-[2px] bg-[#76b9ed] ${current ? "inset-x-0" : "inset-x-[4px]"}`} />
          )}
        </div>
      ))}
      <div className="ml-auto flex w-[60px] flex-col items-end justify-center gap-[3px] pr-[6px] text-[12px] leading-[16px] text-white">
        <span className="pr-[6px]">17:36</span>
        <span>13.08.2025</span>
      </div>
    </div>
  );
}

/* ---------------- APP ---------------- */

export default function App() {
  return (
    <div className="h-[1080px] w-[1921px] overflow-hidden bg-[#e6e6e6] font-['Noto_Sans',sans-serif] text-[12px] text-[#444]">
      <div className="relative h-[518px]">
        <TitleBar title="товары 1.xls  [Режим совместимости]  -  Excel" active />
        <TabBar activeTab="Вид" />
        <div className="relative z-10 flex h-[93px] bg-[#f3f2f1] text-[11.6px] shadow-[0_2px_4px_rgba(0,0,0,0.2)]">
          <ViewRibbon />
          <S w={11} h={7} className="absolute bottom-[4px] right-[8px]">
            <path d="M.5 6 5.5 1l5 5" stroke="#555" />
          </S>
        </div>
        <FormulaBar name="B6" value="Мандарины" />
        <Sheet
          grid={GRID_ONE}
          height="h-[221px]"
          rowTwo="h-[46px] grid-rows-[46px]"
          count={30}
          rows={10}
          lastEmpty
          selRow={6}
          selCol={1}
          thumb="h-[58px]"
          gap="h-[126px]"
        />
        <SheetTabs h="h-[29px]" />
        <StatusBar h="h-[21px]" />
        <div className="absolute inset-y-[34px] left-0 z-20 w-px bg-[#217346]" />
      </div>
      <div className="relative h-[522px]">
        <TitleBar title="товары 2.xls  [Режим совместимости]  -  Excel" tall />
        <TabBar activeTab="Главная" />
        <div className="relative z-10 flex h-[93px] bg-[#f3f2f1] text-[11.6px] shadow-[0_2px_4px_rgba(0,0,0,0.2)]">
          <HomeRibbon />
          <S w={11} h={7} className="absolute bottom-[4px] right-[8px]">
            <path d="M.5 6 5.5 1l5 5" stroke="#555" />
          </S>
        </div>
        <FormulaBar name="I36" value="" />
        <Sheet
          grid={GRID_TWO}
          height="h-[223px]"
          rowTwo="h-[31px] grid-rows-[31px]"
          count={30}
          rows={11}
          thumb="h-[62px]"
          gap="h-[124px]"
        />
        <SheetTabs h="h-[28px]" />
        <StatusBar h="h-[22px]" />
      </div>
      <Taskbar />
    </div>
  );
}
